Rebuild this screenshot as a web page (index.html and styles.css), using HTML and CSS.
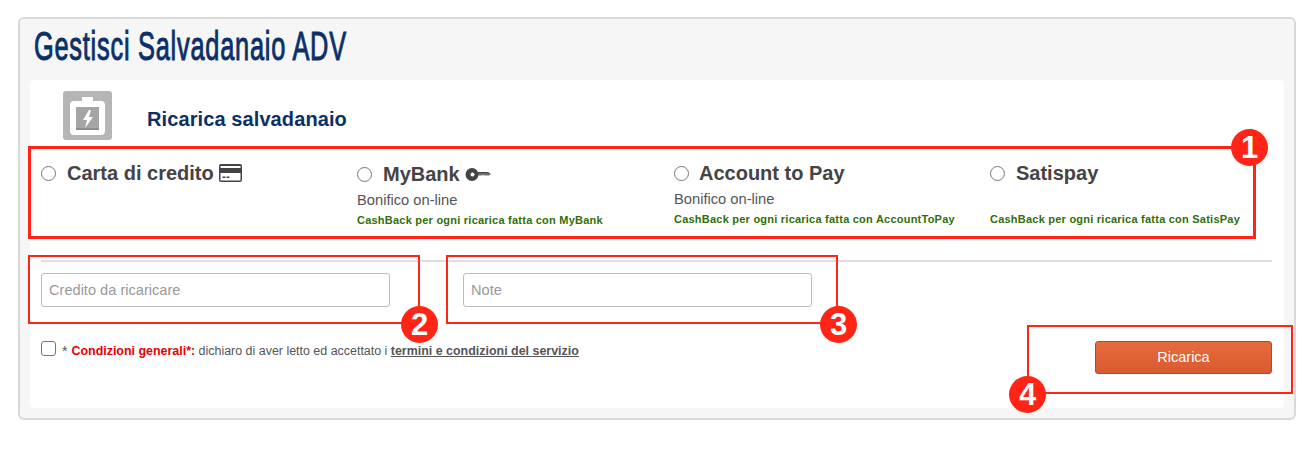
FILE: index.html
```html
<!DOCTYPE html>
<html lang="it">
<head>
<meta charset="utf-8">
<title>Gestisci Salvadanaio ADV</title>
<link rel="stylesheet" href="styles.css">
</head>
<body>
<main class="panel">
  <h1 class="panel-title"><span class="panel-title-text">Gestisci Salvadanaio ADV</span></h1>
  <section class="card">
    <header class="card-head">
      <span class="head-icon">
        <svg width="49" height="49" viewBox="0 0 49 49">
          <rect width="49" height="49" rx="3" fill="#b5b5b5"/>
          <path d="M19 6h11v4h8a4 4 0 0 1 4 4v26a4 4 0 0 1-4 4H11a4 4 0 0 1-4-4V14a4 4 0 0 1 4-4h8z" fill="#fff"/>
          <rect x="13" y="16" width="23" height="23" fill="#a5a5a5"/>
          <rect x="13" y="37" width="23" height="2" fill="#8e8e8e"/>
          <path d="M26 19l-6 10h4l-2 8 8-11h-4l2-7z" fill="#fff"/>
        </svg>
      </span>
      <h2 class="card-title">Ricarica salvadanaio</h2>
    </header>
    <div class="methods">
      <div class="method">
        <label class="method-label"><input class="radio" type="radio" name="m">Carta di credito<svg class="icon-card" width="23" height="18" viewBox="0 0 23 18"><path fill-rule="evenodd" d="M2 0h19a2 2 0 0 1 2 2v14a2 2 0 0 1-2 2H2a2 2 0 0 1-2-2V2a2 2 0 0 1 2-2zM1.500 2v2h20V2zm0 7v7.500h20V9zm2 3.500h3V14h-3zm4 0h3V14h-3z" fill="#444"/></svg></label>
      </div>
      <div class="method method-lower">
        <label class="method-label"><input class="radio" type="radio" name="m">MyBank<svg class="icon-key" width="26" height="13" viewBox="0 0 26 13"><path d="M12 4.500h12l2 1.500-2 1.500h-5l-1-.7-1 .7h-5z" fill="#6e6e6e"/><path d="M12 4h12l-1 1H12z" fill="#444"/><path fill-rule="evenodd" d="M7 0a6.500 6.500 0 1 1 0 13A6.500 6.500 0 0 1 7 0zm.500 4.500a2 2 0 1 0 0 4 2 2 0 0 0 0-4z" fill="#444"/></svg></label>
        <p class="method-sub">Bonifico on-line</p>
        <p class="method-cash">CashBack per ogni ricarica fatta con MyBank</p>
      </div>
      <div class="method">
        <label class="method-label"><input class="radio radio-tight" type="radio" name="m">Account to Pay</label>
        <p class="method-sub">Bonifico on-line</p>
        <p class="method-cash">CashBack per ogni ricarica fatta con AccountToPay</p>
      </div>
      <div class="method">
        <label class="method-label"><input class="radio" type="radio" name="m">Satispay</label>
        <p class="method-sub">&nbsp;</p>
        <p class="method-cash">CashBack per ogni ricarica fatta con SatisPay</p>
      </div>
    </div>
    <hr class="divider">
    <div class="fields">
      <input class="field" type="text" placeholder="Credito da ricaricare">
      <input class="field" type="text" placeholder="Note">
    </div>
    <div class="footer-row">
      <label class="terms">
        <input class="check" type="checkbox">
        <span class="star">*</span>
        <span class="terms-text"><b class="terms-red">Condizioni generali*:</b> dichiaro di aver letto ed accettato i <a class="terms-link" href="#">termini e condizioni del servizio</a></span>
      </label>
      <button class="submit" type="button">Ricarica</button>
    </div>
  </section>
</main>

<div class="mark mark-1"></div><span class="badge badge-1">1</span>
<div class="mark mark-2"></div><span class="badge badge-2">2</span>
<div class="mark mark-3"></div><span class="badge badge-3">3</span>
<div class="mark mark-4"></div><span class="badge badge-4">4</span>
</body>
</html>
```

FILE: styles.css
```css
* { box-sizing: border-box; }
html, body { margin: 0; padding: 0; background: #fff; }
body {
  position: relative;
  height: 459px;
  overflow: hidden;
  padding: 17px 14px 0 18px;
  font-family: "Liberation Sans", Arial, sans-serif;
  color: #444;
}
.panel {
  height: 403px;
  background: #f6f6f6;
  border: 2px solid #d9d9d9;
  border-radius: 6px;
  display: flex;
  flex-direction: column;
}
.panel-title {
  margin: 0;
  height: 61px;
  padding: 6px 0 0 14px;
  font-family: "Liberation Sans", sans-serif;
  font-size: 40px;
  line-height: 42px;
  font-weight: 400;
  letter-spacing: 1.200px;
  color: #0b3068;
  -webkit-text-stroke: 1px #0b3068;
  white-space: nowrap;
}
.panel-title-text {
  display: inline-block;
  transform: scaleX(0.634);
  transform-origin: left center;
}
.card {
  flex: 1;
  margin: 0 10px 10px;
  background: #fff;
  border-radius: 4px;
  padding: 11px 12px 0 11px;
  display: flex;
  flex-direction: column;
}
.card-head {
  display: flex;
  align-items: center;
  gap: 35px;
  padding-left: 22px;
  height: 49px;
}
.head-icon { display: block; width: 49px; height: 49px; }
.head-icon svg { display: block; }
.card-title {
  margin: 6px 0 0;
  font-size: 20px;
  line-height: 22px;
  font-weight: 700;
  letter-spacing: 0.1px;
  color: #0b3068;
}
.methods {
  display: grid;
  grid-template-columns: 316px 317px 316px 316px;
  margin-top: 21px;
  height: 99px;
}
.method-lower { padding-top: 1px; }
.method-label {
  display: flex;
  align-items: center;
  height: 24px;
  font-size: 20px;
  font-weight: 700;
  color: #444;
  white-space: nowrap;
}
.radio {
  appearance: none;
  width: 15px;
  height: 15px;
  margin: 0 11px 0 0;
  border: 1px solid #777;
  border-radius: 50%;
  background: #fff;
  flex: none;
}
.radio-tight { margin-right: 10px; }
.icon-card { margin-left: 5px; }
.icon-key { margin-left: 5px; }
.method-sub {
  margin: 4px 0 0;
  font-size: 14.700px;
  line-height: 20px;
  color: #555;
}
.method-cash {
  margin: 3px 0 0;
  font-size: 11px;
  line-height: 14px;
  font-weight: 700;
  letter-spacing: 0.230px;
  color: #2f6f0c;
  white-space: nowrap;
}
.divider {
  height: 2px;
  margin: 0;
  border: 0;
  background: #dedede;
  flex: none;
}
.fields {
  display: flex;
  gap: 73px;
  margin-top: 11px;
}
.field {
  width: 349px;
  height: 34px;
  padding: 0 7px;
  border: 1px solid #bbb;
  border-radius: 3px;
  background: #fff;
  font-family: inherit;
  font-size: 14.600px;
  color: #444;
}
.field::placeholder { color: #999; opacity: 1; }
.footer-row {
  display: flex;
  justify-content: space-between;
  align-items: flex-start;
  margin-top: 34px;
}
.terms {
  display: flex;
  align-items: flex-start;
  font-size: 12.450px;
  line-height: 20px;
  color: #555;
}
.check {
  appearance: none;
  width: 15px;
  height: 15px;
  margin: 0 6px 0 0;
  border: 1px solid #777;
  border-radius: 3px;
  background: #fff;
}
.star { font-size: 14px; margin-right: 4px; }
.terms-red { color: #e60000; font-weight: 700; }
.terms-link { color: #555; font-weight: 700; text-decoration: underline; }
.submit {
  width: 177px;
  height: 33px;
  padding: 0 0 2px;
  border: 1px solid #b34a26;
  border-radius: 3px;
  background: linear-gradient(#e66b3b, #d95a30);
  color: #fff;
  font-family: inherit;
  font-size: 14.500px;
}
.mark {
  position: absolute;
  border: 2px solid #ff2416;
}
.mark-1 { left: 28px; top: 146px; width: 1228px; height: 92.500px; border-width: 3px; }
.mark-2 { left: 28px; top: 255px; width: 392px; height: 69px; }
.mark-3 { left: 446px; top: 255px; width: 392px; height: 69px; }
.mark-4 { left: 1027px; top: 325px; width: 266px; height: 69px; }
.badge {
  position: absolute;
  width: 37px;
  height: 37px;
  border-radius: 50%;
  background: #ff2416;
  color: #fff;
  font-size: 31px;
  font-weight: 700;
  line-height: 37px;
  text-align: center;
}
.badge-1 { left: 1231px; top: 129px; }
.badge-2 { left: 401px; top: 306px; }
.badge-3 { left: 820px; top: 306px; }
.badge-4 { left: 1009px; top: 376px; }
```
